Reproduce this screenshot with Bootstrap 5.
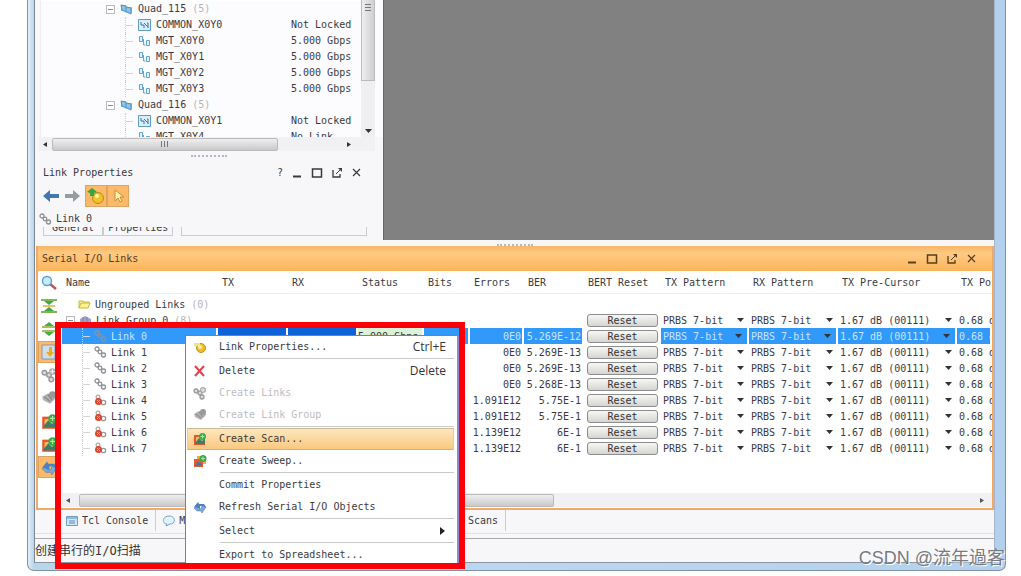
<!DOCTYPE html>
<html lang="zh-CN">
<head>
<meta charset="utf-8">
<meta name="viewport" content="width=device-width, initial-scale=1">
<title>Serial I/O Links</title>
<link href="https://cdn.jsdelivr.net/npm/bootstrap@5.3.0/dist/css/bootstrap.min.css" rel="stylesheet">
<style>
body{font:10px/16px "DejaVu Sans Mono","Noto Sans CJK SC",monospace;color:#3a3a3e;background:#fff;overflow:hidden}
svg{flex:none;display:block}
button{font:inherit;color:inherit}
.app-window{margin:0 15px 0 27px;padding:0 10px 7px 6px;background:linear-gradient(90deg,#e2eef7,#b9d5ea 6px,#bcd6f1 50%,#b3d1ee);border:1px solid #8093a6;border-top:0;border-radius:0 0 7px 7px}
.app-body{background:#f7f7fa;border-left:1px solid #7d8794;border-right:1px solid #a9b4c4}
.upper{height:240px}
.side{width:348px}
.canvas-area{background:#818181;border-left:1px solid #666}
.tree-box{height:137px;margin-left:5px;border-left:1px solid #eee;background:#fcfcfe}
.tree-row{height:16px;gap:5px;white-space:nowrap}
.tree-row .val{width:70px}
.lvl1{padding-left:65px}
.lvl2{padding-left:84px}
.lvl2::before,.branch::before{content:"";width:8px;height:16px;border-left:1px dotted #ccc;background:linear-gradient(#d4d4d6,#d4d4d6) 0 50%/100% 1px no-repeat}
.count{color:#b4b4b8}
.fold{width:9px;height:9px;border:1px solid #b9b9bd;background:#fff;display:flex;align-items:center;justify-content:center}
.fold::before{content:"";width:5px;border-top:1px solid #888}
.vbar{width:14px;background:#efeff1}
.vthumb{height:81px;background:linear-gradient(90deg,#eee,#cfcfd1);border:1px solid #bbb;border-top:0;text-align:center}
.hbar{height:14px;background:#f1f1f3}
.hthumb{height:13px;border:1px solid #bababa;border-radius:2px;background:linear-gradient(#efefef,#c9c9c9);display:flex;align-items:center;justify-content:center}
.grip{width:36px;border-top:2px dotted #b9b9bd}
.tool{width:22px;height:22px;padding:0;border:1px solid #d9a561;background:#fdb96a}
.plain{padding:0;border:0;background:none}
.tabstub{height:9px;border:1px solid #ccc;border-top:0;overflow:hidden;line-height:2px}
.links-panel{margin:0 0 0 1px;border:2px solid #efaa68;border-top:0;background:#fff;height:264px}
.links-title{height:25px;background:linear-gradient(#f7b665,#ffc982 30%,#fbb55c);padding:0 14px 0 4px;color:#54401f}
.toolcol{width:24px;padding-top:1px}
.toolcol button{width:22px;height:22px;margin-bottom:1px;display:flex;align-items:center;justify-content:center}
.grid-area{min-width:0}
.table-clip{height:222px;overflow:hidden}
.links-grid{table-layout:fixed;width:100%;border-collapse:separate;border-spacing:0}
.links-grid th{height:23px;font-weight:400;padding:1px 0 0 4px;border-bottom:1px solid #ededee;overflow:hidden;white-space:nowrap}
.links-grid td{height:16px;padding:0;overflow:hidden;white-space:nowrap;line-height:15px}
.links-grid td.num{padding-right:3px;text-align:right}
.links-grid tbody:before{content:"";display:block;height:2px}
.sel td{background:#3199fa;color:#c7e3ff;border-right:2px solid #fff}
.sel td.deep{background:#0d62d8}
.sel td.ok{background:#dcf2d8;color:#333}
.sel td.noedge{background:#fff}
.links-grid .sel td.num{padding-right:1px}
.reset{width:71px;height:13px;display:block;margin:0 3px;padding:0;border:1px solid #8d8d8d;border-radius:3px;background:linear-gradient(#f7f7f5,#d4d4d0);line-height:12px;color:#333}
.pick{appearance:none;font:inherit;color:inherit;width:100%;height:15px;line-height:15px;padding:0 0 0 2px;border:0;display:block;background:url("data:image/svg+xml,%3Csvg xmlns='http://www.w3.org/2000/svg' width='7' height='4'%3E%3Cpath d='M0 0h7L3.5 4z' fill='%23333'/%3E%3C/svg%3E") no-repeat right 5px center}
.pick.wide{width:119px}
.branch{padding-left:20px;gap:4px}
.doc-tabs{height:23px;padding-left:24px}
.doc-tab{padding:0 7px;gap:4px;border-right:1px solid #ccc!important;height:21px;white-space:nowrap}
.status-line{height:25px;border-top:1px solid #aaa;border-bottom:1px solid #8a95a1;font-size:12px;line-height:24px;color:#333}
.mark-frame{position:absolute;left:55px;top:322px;width:410px;height:247px;border:6px solid #fb0007;pointer-events:none;z-index:5}
.ctx{position:absolute;left:185px;top:335px;width:274px;padding:0 3px 0 1px;border:1px solid #7777c4;border-right:2px solid #8c88d2;border-bottom:0;background:#fff;z-index:4}
.ctx button{width:100%;height:22px;padding:0 7px 0 5px;border:1px solid transparent;background:none;text-align:left;display:flex;align-items:center;white-space:nowrap}
.ctx .txt{margin-left:12px}
.ctx .ico{width:14px}
.ctx .bar{height:2px;margin-left:33px;border-top:1px solid #c9c9c9}
.ctx .off{color:#bcbcc0}
.ctx .hot{background:linear-gradient(#fde7bd,#fac980);border-color:#c9b994 #f1c98d #d5b177}
.ctx kbd{font:12px/16px "Open Sans",sans-serif;color:#333;background:none;padding:0;margin-left:auto}
.stamp{position:absolute;right:16px;top:545px;font:18px/26px "Liberation Sans","Noto Sans CJK TC",sans-serif;color:#777b80;text-shadow:1px 1px 0 #fff;z-index:6}
</style>
<script src="https://cdn.jsdelivr.net/npm/bootstrap@5.3.0/dist/js/bootstrap.bundle.min.js"></script>
</head>
<body>
<svg class="d-none">
 <symbol id="quad" viewBox="0 0 13 12"><path d="M1 2h5v6H1zM6 4h6v6H6z" fill="#8fc4e8"/><path d="M1 2l5 1v6l-4-2zM6 4l5 1v6l-4-2" fill="none" stroke="#4b8fc5"/></symbol>
 <symbol id="common" viewBox="0 0 13 12"><path d="M.5 .5h12v11H.5z" fill="#d9eefa" stroke="#5f9cbd"/><path d="M3 3v3h3v3M6 4l4 4M9 4h1v5" fill="none" stroke="#357ca7"/></symbol>
 <symbol id="mgt" viewBox="0 0 13 12"><path d="M1.500 1.500h3v5h-3zM5.500 4v6h2M8.500 5.500h3v5h-3z" fill="#dceffb" stroke="#64a4cf"/></symbol>
 <symbol id="link" viewBox="0 0 13 12"><g fill="none" stroke="#8d9096" stroke-width="1.300"><circle cx="3" cy="3" r="2"/><circle cx="6" cy="6" r="1.800"/><circle cx="9.500" cy="9" r="2"/></g></symbol>
 <symbol id="badlink" viewBox="0 0 13 12"><circle cx="4" cy="3" r="2" fill="none" stroke="#9b8a84"/><circle cx="9.500" cy="8.500" r="2.200" fill="none" stroke="#999" stroke-width="1.300"/><circle cx="4.500" cy="7.500" r="3.500" fill="#df4630"/><path d="M3 6l3 3M6 6L3 9" stroke="#f5a18f"/></symbol>
 <symbol id="folder" viewBox="0 0 13 12"><path d="M1 10V3h4l1 1h5v2" fill="#f8efa0" stroke="#c9b936"/><path d="M1 10l2-5h9l-2 5z" fill="#fbf28f" stroke="#c9b936"/></symbol>
 <symbol id="group" viewBox="0 0 13 12"><path d="M1 5l5-3 6 3v3l-5 3-6-3z" fill="#9fa3c4"/><path d="M4 3v6M8 3v7" stroke="#7980ab"/></symbol>
 <symbol id="scan" viewBox="0 0 14 14"><path d="M1 3h11v10H1z" fill="#e8572c"/><path d="M3 5h7v6H3z" fill="#f3c65a"/><path d="M2 11l4-5 3 3 3-2v5H2z" fill="#3e7d6b"/><circle cx="9.500" cy="4.500" r="3.500" fill="#35ad4b"/><path d="M9.500 2.500v4M7.500 4.500h4" stroke="#a9e6a5"/></symbol>
 <symbol id="sweep" viewBox="0 0 14 14"><path d="M4 2h9v8H4z" fill="#edac45"/><path d="M1 5h9v8H1z" fill="#e85c31"/><path d="M2 11l3-4 4 3v2H2z" fill="#4d79a8"/><circle cx="10" cy="4.500" r="3.500" fill="#35ad4b"/><path d="M10 2.500v4M8 4.500h4" stroke="#a9e6a5"/></symbol>
 <symbol id="graylinks" viewBox="0 0 14 14"><g fill="#ddd" stroke="#999" stroke-width="1.300"><circle cx="3" cy="5" r="2"/><circle cx="7" cy="7" r="2"/><circle cx="9" cy="11" r="2"/></g><circle cx="10" cy="4" r="3" fill="#aaa"/><path d="M10 2v4M8 4h4" stroke="#eee"/></symbol>
 <symbol id="graygroup" viewBox="0 0 14 14"><path d="M1 6l5-3 6 1 1 3-5 5-6-3z" fill="#b1b1b1"/><path d="M3 6l5 4M6 4l4 5" stroke="#858585"/><circle cx="10" cy="4" r="3" fill="#999"/></symbol>
 <symbol id="prop" viewBox="0 0 14 14"><circle cx="8" cy="8" r="4.500" fill="#f1bd24" stroke="#c48a25"/><path d="M1 3h6v3H1z" fill="#f3df91"/><circle cx="7" cy="7" r="2" fill="#fff3a0"/></symbol>
 <symbol id="refresh" viewBox="0 0 14 14"><path d="M1 7l4-5 1 2h5l2 3-2 1-1-2H7v3z" fill="#4a83c4"/><path d="M13 7l-4 6-1-2H4L1 8l2-1 2 2h3l1-3z" fill="#79abda" stroke="#4a78ad" stroke-width=".5"/></symbol>
 <symbol id="max" viewBox="0 0 12 12"><path d="M1.500 2h9v8h-9z" fill="none" stroke="currentColor" stroke-width="1.500"/></symbol>
 <symbol id="min" viewBox="0 0 12 12"><path d="M2 9.500h8" stroke="currentColor" stroke-width="2"/></symbol>
 <symbol id="pop" viewBox="0 0 12 12"><path d="M2 3v7h7V7" fill="none" stroke="currentColor" stroke-width="1.300"/><path d="M5 7l4-4" stroke="currentColor"/><path d="M7 1h4v4z" fill="currentColor"/></symbol>
 <symbol id="shut" viewBox="0 0 12 12"><path d="M2 2l7 7M9 2L2 9" stroke="currentColor" stroke-width="1.200"/></symbol>
</svg>
<main class="app-window"><div class="app-body">
 <div class="upper d-flex">
  <section class="side d-flex flex-column flex-shrink-0">
   <div class="tree-box d-flex overflow-hidden">
    <div id="tree" class="flex-grow-1 border-top border-white"></div>
    <div class="vbar d-flex flex-column justify-content-between me-2"><div class="vthumb d-flex justify-content-center pt-1"><svg width="6" height="7"><path d="M0 .5h6M0 3.500h6M0 6.500h6" stroke="#777"/></svg></div><svg class="mx-auto mb-1" width="7" height="5"><path d="M0 1h7L3.500 5z" fill="#333"/></svg></div>
   </div>
   <div class="hbar d-flex align-items-center ps-1 ms-1 me-2"><svg width="5" height="7"><path d="M4 1v5L0 3.500z" fill="#333"/></svg><div class="hthumb ms-1" style="width:68%"><svg width="8" height="6"><path d="M.5 0v6M3.500 0v6M6.500 0v6" stroke="#777"/></svg></div><svg class="ms-auto me-4" width="5" height="7"><path d="M1 1v5l4-2.500z" fill="#333"/></svg></div>
   <div class="grip mx-auto mt-1"></div>
   <div class="d-flex align-items-center mt-2 ps-2 pe-3">
    <span>Link Properties</span>
    <div class="ms-auto d-flex gap-2 me-1"><button class="plain" aria-label="Help">?</button><button class="plain" aria-label="Minimize"><svg width="12" height="12"><use href="#min"/></svg></button><button class="plain" aria-label="Maximize"><svg width="12" height="12"><use href="#max"/></svg></button><button class="plain" aria-label="Float"><svg width="12" height="12"><use href="#pop"/></svg></button><button class="plain" aria-label="Close"><svg width="12" height="12"><use href="#shut"/></svg></button></div>
   </div>
   <div class="d-flex align-items-center ps-2 mt-1">
    <button class="plain me-1" aria-label="Back"><svg width="17" height="14"><path d="M0 7l7-6v4h9v4H7v4z" fill="#4277b4"/></svg></button>
    <button class="plain me-1" aria-label="Forward"><svg width="17" height="14"><path d="M16 7L9 1v4H1v4h8v4z" fill="#969c9f"/></svg></button>
    <button class="tool" aria-label="Auto update"><svg width="20" height="20"><circle cx="12" cy="12" r="5.500" fill="#f0c128" stroke="#b98a20"/><circle cx="11" cy="10" r="2" fill="#fff6a0"/><path d="M1 6l5-4 5 4-3 1v3H4V7z" fill="#37a542"/></svg></button>
    <button class="tool" aria-label="Select"><svg width="20" height="20"><path d="M7 4v11l3-3 2 4 2-1-2-4h4z" fill="#fff0b0" stroke="#c19135"/></svg></button>
   </div>
   <div class="d-flex align-items-center ps-1 gap-1 mt-1"><svg width="13" height="12"><use href="#link"/></svg><span>Link 0</span></div>
   <div class="d-flex ms-2 me-3"><div class="tabstub px-2">General</div><div class="tabstub px-1">Properties</div><div class="tabstub flex-grow-1 ms-2"></div></div>
  </section>
  <section class="canvas-area flex-grow-1" aria-label="Workspace"></section>
 </div>
 <div class="d-flex justify-content-center pt-1"><div class="grip"></div></div>
 <section class="links-panel">
  <div class="links-title d-flex align-items-center"><span>Serial I/O Links</span>
   <div class="ms-auto d-flex gap-2"><button class="plain" aria-label="Minimize"><svg width="12" height="12"><use href="#min"/></svg></button><button class="plain" aria-label="Maximize"><svg width="12" height="12"><use href="#max"/></svg></button><button class="plain" aria-label="Float"><svg width="12" height="12"><use href="#pop"/></svg></button><button class="plain" aria-label="Close"><svg width="12" height="12"><use href="#shut"/></svg></button></div></div>
  <div class="d-flex">
   <div class="toolcol flex-shrink-0">
    <button class="plain" aria-label="Search"><svg width="16" height="16"><path d="M9 9l6 5" stroke="#c5505f" stroke-width="2.500"/><circle cx="6" cy="6" r="4.500" fill="#c9ecfb" stroke="#5f9fce" stroke-width="1.500"/></svg></button>
    <button class="plain" aria-label="Collapse all"><svg width="16" height="16"><path d="M0 1h16v2H0zM0 13h16v2H0z" fill="#7fb656"/><path d="M3 3h10L8 7zM3 13h10L8 9z" fill="#41a63b"/><path d="M2 7h12v2H2z" fill="#e3c27a"/></svg></button>
    <button class="plain" aria-label="Expand all"><svg width="16" height="16"><path d="M3 5l5-4 5 4zM3 11l5 4 5-4z" fill="#47ad40"/><path d="M1 5h14v2H1zM1 9h14v2H1z" fill="#a7bd67"/></svg></button>
    <button class="tool" aria-label="Group"><svg width="16" height="16"><path d="M1 1h13v14H1z" fill="#d4dde6" stroke="#829bb4"/><path d="M8 3v5H5l4 5 4-5h-2V3z" fill="#eaad20"/></svg></button>
    <button class="plain" aria-label="Create links"><svg width="16" height="16"><use href="#graylinks"/></svg></button>
    <button class="plain" aria-label="Create link group"><svg width="16" height="16"><use href="#graygroup"/></svg></button>
    <button class="plain" aria-label="Create scan"><svg width="17" height="17"><use href="#scan"/></svg></button>
    <button class="plain" aria-label="Create sweep"><svg width="17" height="17"><use href="#scan"/></svg></button>
    <button class="tool" aria-label="Refresh"><svg width="17" height="17"><use href="#refresh"/></svg></button>
   </div>
   <div class="grid-area flex-grow-1">
    <div class="table-clip">
     <table class="links-grid">
      <colgroup><col style="width:156px"><col style="width:70px"><col style="width:70px"><col style="width:66px"><col style="width:46px"><col style="width:54px"><col style="width:60px"><col style="width:77px"><col style="width:88px"><col style="width:89px"><col style="width:119px"><col></colgroup>
      <thead><tr><th>Name</th><th>TX</th><th>RX</th><th>Status</th><th>Bits</th><th>Errors</th><th>BER</th><th>BERT Reset</th><th>TX Pattern</th><th>RX Pattern</th><th>TX Pre-Cursor</th><th>TX Post-Cursor</th></tr></thead>
      <tbody id="rows"></tbody>
     </table>
    </div>
    <div class="hbar d-flex align-items-center ps-1 pe-1"><svg width="5" height="7"><path d="M4 1v5L0 3.500z" fill="#555"/></svg><div class="hthumb ms-2" style="width:51.5%"></div><svg class="ms-auto me-1" width="5" height="7"><path d="M1 1v5l4-2.500z" fill="#555"/></svg></div>
   </div>
  </div>
 </section>
 <nav class="doc-tabs d-flex">
  <button class="plain doc-tab d-flex align-items-center"><svg width="12" height="12"><path d="M.5 1.500h11v9H.5z" fill="#cfe6f6" stroke="#6c9fc4"/><path d="M1 3h10M3 6h6M3 8h6" stroke="#5b8fb8"/></svg>Tcl Console</button>
  <button class="plain doc-tab d-flex align-items-center"><svg width="12" height="12"><path d="M6 1C-1 1-1 9 4 9l-1 2 4-2c6 0 6-8-1-8z" fill="#e3f2fc" stroke="#6ca5d2"/></svg>Messages</button>
  <button class="plain doc-tab d-flex align-items-center"><svg width="12" height="12"><use href="#link"/></svg>Serial I/O Links<svg width="12" height="12"><use href="#shut"/></svg></button>
  <button class="plain doc-tab d-flex align-items-center"><svg width="12" height="12"><use href="#scan"/></svg>Serial I/O Scans</button>
 </nav>
 <div class="border-top"></div>
 <footer class="status-line mt-1">创建串行的I/O扫描</footer>
</div></main>

<div class="ctx" role="menu">
 <button role="menuitem"><svg class="ico" height="14"><use href="#prop"/></svg><span class="txt">Link Properties...</span><kbd>Ctrl+E</kbd></button>
 <div class="bar"></div>
 <button role="menuitem"><svg class="ico" height="14"><path d="M2 2l9 10M11 2L2 12" stroke="#e3404c" stroke-width="2"/></svg><span class="txt">Delete</span><kbd>Delete</kbd></button>
 <button role="menuitem" class="off"><svg class="ico" height="14"><use href="#graylinks"/></svg><span class="txt">Create Links</span></button>
 <button role="menuitem" class="off"><svg class="ico" height="14"><use href="#graygroup"/></svg><span class="txt">Create Link Group</span></button>
 <div class="bar"></div>
 <button role="menuitem" class="hot"><svg class="ico" height="14"><use href="#scan"/></svg><span class="txt">Create Scan...</span></button>
 <button role="menuitem"><svg class="ico" height="14"><use href="#sweep"/></svg><span class="txt">Create Sweep..</span></button>
 <div class="bar"></div>
 <button role="menuitem"><span class="ico"></span><span class="txt">Commit Properties</span></button>
 <button role="menuitem"><svg class="ico" height="14"><use href="#refresh"/></svg><span class="txt">Refresh Serial I/O Objects</span></button>
 <div class="bar"></div>
 <button role="menuitem"><span class="ico"></span><span class="txt">Select</span><svg class="ms-auto" width="6" height="8"><path d="M0 0v8l5-4z" fill="#222"/></svg></button>
 <div class="bar"></div>
 <button role="menuitem"><span class="ico"></span><span class="txt">Export to Spreadsheet...</span></button>
</div>
<div class="mark-frame"></div>
<div class="stamp">CSDN @流年過客</div>
<script>
const icon = n => `<svg width="13" height="12"><use href="#${n}"/></svg>`;
const tree = [
  ['quad','Quad_115'],['common','COMMON_X0Y0','Not Locked'],['mgt','MGT_X0Y0','5.000 Gbps'],['mgt','MGT_X0Y1','5.000 Gbps'],
  ['mgt','MGT_X0Y2','5.000 Gbps'],['mgt','MGT_X0Y3','5.000 Gbps'],['quad','Quad_116'],['common','COMMON_X0Y1','Not Locked'],['mgt','MGT_X0Y4','No Link']];
document.getElementById('tree').innerHTML = tree.map(([i,name,val]) => val
  ? `<div class="tree-row lvl2 d-flex align-items-center">${icon(i)}<span>${name}</span><span class="val ms-auto">${val}</span></div>`
  : `<div class="tree-row lvl1 d-flex align-items-center"><span class="fold"></span>${icon(i)}<span>${name} <span class="count">(5)</span></span></div>`).join('');
const pick = (v,label,cls='') => `<select class="pick ${cls}" aria-label="${label}"><option>${v}</option></select>`;
const tail = `<td><button class="reset">Reset</button></td><td>${pick('PRBS 7-bit','TX Pattern')}</td><td>${pick('PRBS 7-bit','RX Pattern')}</td><td>${pick('1.67 dB (00111)','TX Pre-Cursor')}</td><td>${pick('0.68 dB (00000)','TX Post-Cursor','wide')}</td>`;
const links = [['0E0','5.269E-12'],['0E0','5.269E-13'],['0E0','5.269E-13'],['0E0','5.268E-13'],['1.091E12','5.75E-1'],['1.091E12','5.75E-1'],['1.139E12','6E-1'],['1.139E12','6E-1']];
document.getElementById('rows').innerHTML =
  `<tr><td colspan="12"><div class="d-flex align-items-center ps-3 gap-1">${icon('folder')}<span>Ungrouped Links <span class="count">(0)</span></span></div></td></tr>` +
  `<tr><td colspan="7"><div class="d-flex align-items-center gap-1 ps-1"><span class="fold"></span>${icon('group')}<span>Link Group 0 <span class="count">(8)</span></span></div></td>${tail}</tr>` +
  links.map(([e,b],n) => `<tr${n?'':' class="sel"'}><td><div class="branch d-flex align-items-center">${icon(n>3?'badlink':'link')}<span>Link ${n}</span></div></td><td class="deep"></td><td class="deep"></td><td class="ok">${n?'':'5.000 Gbps'}</td><td></td><td class="num">${e}</td><td class="num">${b}</td>${n?tail:tail.replace('<td>','<td class="noedge">')}</tr>`).join('');
</script>
</body>
</html>
